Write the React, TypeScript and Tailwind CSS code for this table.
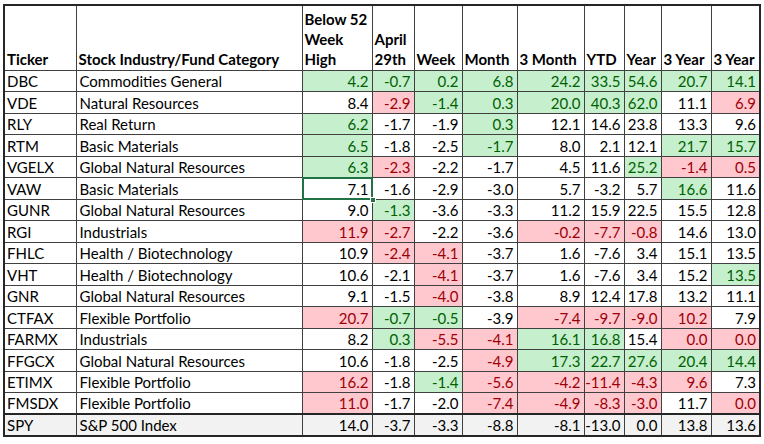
import React from "react"

type C = "g" | "r" | "n"

const ROWS: { t: string; cat: string; v: string[]; c: C[] }[] = [
  { t: "DBC", cat: "Commodities General", v: ["4.2", "-0.7", "0.2", "6.8", "24.2", "33.5", "54.6", "20.7", "14.1"], c: ["g", "g", "g", "g", "g", "g", "g", "g", "g"] },
  { t: "VDE", cat: "Natural Resources", v: ["8.4", "-2.9", "-1.4", "0.3", "20.0", "40.3", "62.0", "11.1", "6.9"], c: ["n", "r", "g", "g", "g", "g", "g", "n", "r"] },
  { t: "RLY", cat: "Real Return", v: ["6.2", "-1.7", "-1.9", "0.3", "12.1", "14.6", "23.8", "13.3", "9.6"], c: ["g", "n", "n", "g", "n", "n", "n", "n", "n"] },
  { t: "RTM", cat: "Basic Materials", v: ["6.5", "-1.8", "-2.5", "-1.7", "8.0", "2.1", "12.1", "21.7", "15.7"], c: ["g", "n", "n", "g", "n", "n", "n", "g", "g"] },
  { t: "VGELX", cat: "Global Natural Resources", v: ["6.3", "-2.3", "-2.2", "-1.7", "4.5", "11.6", "25.2", "-1.4", "0.5"], c: ["g", "r", "n", "n", "n", "n", "g", "r", "r"] },
  { t: "VAW", cat: "Basic Materials", v: ["7.1", "-1.6", "-2.9", "-3.0", "5.7", "-3.2", "5.7", "16.6", "11.6"], c: ["n", "n", "n", "n", "n", "n", "n", "g", "n"] },
  { t: "GUNR", cat: "Global Natural Resources", v: ["9.0", "-1.3", "-3.6", "-3.3", "11.2", "15.9", "22.5", "15.5", "12.8"], c: ["n", "g", "n", "n", "n", "n", "n", "n", "n"] },
  { t: "RGI", cat: "Industrials", v: ["11.9", "-2.7", "-2.2", "-3.6", "-0.2", "-7.7", "-0.8", "14.6", "13.0"], c: ["r", "r", "n", "n", "r", "r", "r", "n", "n"] },
  { t: "FHLC", cat: "Health / Biotechnology", v: ["10.9", "-2.4", "-4.1", "-3.7", "1.6", "-7.6", "3.4", "15.1", "13.5"], c: ["n", "r", "r", "n", "n", "n", "n", "n", "n"] },
  { t: "VHT", cat: "Health / Biotechnology", v: ["10.6", "-2.1", "-4.1", "-3.7", "1.6", "-7.6", "3.4", "15.2", "13.5"], c: ["n", "n", "r", "n", "n", "n", "n", "n", "g"] },
  { t: "GNR", cat: "Global Natural Resources", v: ["9.1", "-1.5", "-4.0", "-3.8", "8.9", "12.4", "17.8", "13.2", "11.1"], c: ["n", "n", "r", "n", "n", "n", "n", "n", "n"] },
  { t: "CTFAX", cat: "Flexible Portfolio", v: ["20.7", "-0.7", "-0.5", "-3.9", "-7.4", "-9.7", "-9.0", "10.2", "7.9"], c: ["r", "g", "g", "n", "r", "r", "r", "r", "n"] },
  { t: "FARMX", cat: "Industrials", v: ["8.2", "0.3", "-5.5", "-4.1", "16.1", "16.8", "15.4", "0.0", "0.0"], c: ["n", "g", "r", "r", "g", "g", "n", "r", "r"] },
  { t: "FFGCX", cat: "Global Natural Resources", v: ["10.6", "-1.8", "-2.5", "-4.9", "17.3", "22.7", "27.6", "20.4", "14.4"], c: ["n", "n", "n", "r", "g", "g", "g", "g", "g"] },
  { t: "ETIMX", cat: "Flexible Portfolio", v: ["16.2", "-1.8", "-1.4", "-5.6", "-4.2", "-11.4", "-4.3", "9.6", "7.3"], c: ["r", "n", "g", "r", "r", "r", "r", "r", "n"] },
  { t: "FMSDX", cat: "Flexible Portfolio", v: ["11.0", "-1.7", "-2.0", "-7.4", "-4.9", "-8.3", "-3.0", "11.7", "0.0"], c: ["r", "n", "n", "r", "r", "r", "r", "n", "r"] },
]

const SPY = ["14.0", "-3.7", "-3.3", "-8.8", "-8.1", "-13.0", "0.0", "13.8", "13.6"]

const COLS = [72, 226, 70, 42, 48, 55, 67, 40, 37, 50, 49]

const fill: Record<C, string> = {
  g: "bg-[#c6efce] text-[#006100]",
  r: "bg-[#ffc7ce] text-[#9c0006]",
  n: "bg-white text-black",
}

export default function App() {
  return (
    <div className="w-[764px] h-[444px] bg-white pl-[3px] pt-[4px] font-['Lato','Liberation_Sans',sans-serif] text-[15px] text-black">
      <table className="table-fixed border-collapse border-2 border-[#262626] w-[756px]">
        <colgroup>
          {COLS.map((w, i) => (
            <col key={i} style={{ width: w }} />
          ))}
        </colgroup>
        <thead>
          <tr className="h-[65px] font-bold leading-[20px] align-bottom">
            <th className="border border-[#404040] text-left px-[2px] pb-[1px]">Ticker</th>
            <th className="border border-[#404040] text-left px-[2px] pb-[1px]">Stock Industry/Fund Category</th>
            <th className="border border-[#404040] text-left px-[2px] pb-[1px]">Below 52<br />Week<br />High</th>
            <th className="border border-[#404040] text-left px-[2px] pb-[1px]">April<br />29th</th>
            <th className="border border-[#404040] text-left px-[2px] pb-[1px]">Week</th>
            <th className="border border-[#404040] text-left px-[2px] pb-[1px]">Month</th>
            <th className="border border-[#404040] text-left px-[2px] pb-[1px]">3 Month</th>
            <th className="border border-[#404040] text-left px-[2px] pb-[1px]">YTD</th>
            <th className="border border-[#404040] text-left px-[2px] pb-[1px]">Year</th>
            <th className="border border-[#404040] text-left px-[2px] pb-[1px] whitespace-nowrap">3 Year</th>
            <th className="border border-[#404040] text-left px-[2px] pb-[1px] whitespace-nowrap">3 Year</th>
          </tr>
        </thead>
        <tbody>
          {ROWS.map((r) => (
            <tr key={r.t} className="h-[21.5px] leading-[18px] align-bottom">
              <td className="border border-[#404040] px-[2px] pb-[1px]">{r.t}</td>
              <td className="border border-[#404040] px-[3px] pb-[1px]">{r.cat}</td>
              {r.v.map((v, i) => (
                <td
                  key={i}
                  className={`border border-[#404040] text-right pr-[3px] pb-[1px] ${fill[r.c[i]]} ${r.t === "VAW" && i === 0 ? "relative" : ""}`}
                >
                  {v}
                  {r.t === "VAW" && i === 0 && (
                    <>
                      <span className="absolute inset-[-1px] border-2 border-[#217346]" />
                      <span className="absolute right-[-4px] bottom-[-4px] w-[6px] h-[6px] bg-[#217346] border border-white" />
                    </>
                  )}
                </td>
              ))}
            </tr>
          ))}
          <tr className="h-[21.5px] leading-[18px] align-bottom bg-[#f2f2f2]">
            <td className="border border-[#404040] border-t-2 border-t-[#262626] px-[2px] pb-[1px]">SPY</td>
            <td className="border border-[#404040] border-t-2 border-t-[#262626] px-[3px] pb-[1px]">S&amp;P 500 Index</td>
            {SPY.map((v, i) => (
              <td key={i} className="border border-[#404040] border-t-2 border-t-[#262626] text-right pr-[3px] pb-[1px]">
                {v}
              </td>
            ))}
          </tr>
        </tbody>
      </table>
    </div>
  )
}
